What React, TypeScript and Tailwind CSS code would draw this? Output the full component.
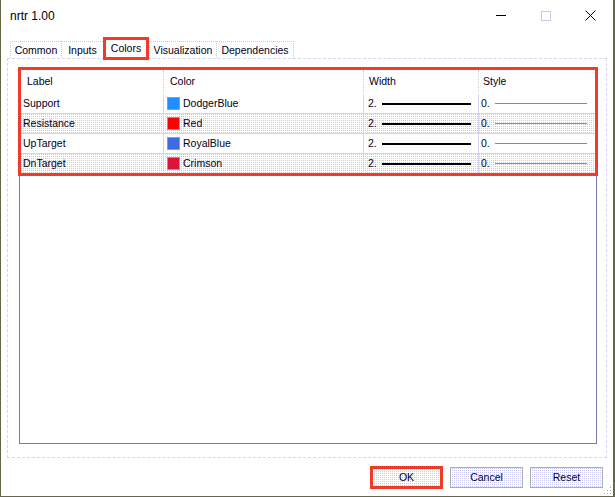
import React from "react";

const rows = [
  { label: "Support", color: "#1e90ff", name: "DodgerBlue", alt: false },
  { label: "Resistance", color: "#ff0000", name: "Red", alt: true },
  { label: "UpTarget", color: "#4169e1", name: "RoyalBlue", alt: false },
  { label: "DnTarget", color: "#dc143c", name: "Crimson", alt: true },
];

function Tab({ label, w }: { label: string; w: string }) {
  return (
    <div
      className={`${w} h-[17px] flex items-center justify-center border-l border-t border-dotted border-[#c4c4ee] text-[10.5px] leading-none text-[#00001a]`}
    >
      {label}
    </div>
  );
}

export default function App() {
  return (
    <div
      className="relative w-[615px] h-[497px] bg-white border-l border-r-2 border-b border-[#66664a] flex flex-col"
      style={{ fontFamily: '"Liberation Sans", Arial, sans-serif' }}
    >
      {/* Title bar */}
      <div className="h-[31px] flex items-center shrink-0">
        <span className="pl-[9px] text-[12px] text-black leading-none">nrtr 1.00</span>
        <div className="ml-auto flex h-full">
          <div className="w-[45px] h-full flex items-center justify-center">
            <div className="w-[10px] h-px bg-black" />
          </div>
          <div className="w-[45px] h-full flex items-center justify-center">
            <div className="w-[10px] h-[10px] border border-[#c8c8ee]" />
          </div>
          <div className="w-[45px] h-full flex items-center justify-center">
            <svg width="11" height="11" viewBox="0 0 11 11">
              <path d="M0.5 0.5 L10.5 10.5 M10.5 0.5 L0.5 10.5" stroke="#000" strokeWidth="1" />
            </svg>
          </div>
        </div>
      </div>

      {/* Tabs */}
      <div className="h-[27px] flex items-end pl-[9px] shrink-0">
        <Tab label="Common" w="w-[51px]" />
        <Tab label="Inputs" w="w-[42px]" />
        <div className="relative z-10 w-[46px] h-[23px] -mb-[2px] border-[3px] border-[#f23a2a] bg-white flex items-start justify-center pt-[3px] text-[10.5px] leading-none text-[#00001a]">
          Colors
        </div>
        <Tab label="Visualization" w="w-[67px]" />
        <div className="w-[78px] h-[17px] flex items-center justify-center border-l border-t border-r border-dotted border-[#c4c4ee] text-[10.5px] leading-none text-[#00001a]">
          Dependencies
        </div>
      </div>

      {/* Panel */}
      <div className="ml-[6px] w-[600px] h-[400px] border border-dashed border-[#d4d4f6] pl-[11px] pt-[8px] shrink-0">
        <div className="relative w-[578px] h-[377px] border border-[#7a7ab2] bg-white text-[10.5px] leading-none text-[#00001a]">
          {/* header */}
          <div className="flex h-[26px] items-center">
            <div className="w-[143px] h-full flex items-center pl-[7px]">Label</div>
            <div className="w-[200px] h-[22px] flex items-center pl-[6px] border-l border-dotted border-[#c8c8e8]">Color</div>
            <div className="w-[115px] h-[22px] flex items-center pl-[5px] border-l border-dotted border-[#c8c8e8]">Width</div>
            <div className="w-[118px] h-[22px] flex items-center pl-[4px] border-l border-dotted border-[#c8c8e8]">Style</div>
          </div>
          {rows.map((r) => (
            <div
              key={r.label}
              className={`flex h-[20px] border-b border-[#d4d4f2] ${
                r.alt
                  ? "bg-[image:repeating-conic-gradient(#c8c8ee_0%_25%,#ffffff_0%_100%)] bg-[length:2px_2px]"
                  : "bg-white"
              }`}
            >
              <div className="w-[143px] h-full flex items-center pl-[3px]">{r.label}</div>
              <div className="w-[200px] h-full flex items-center pl-[3px] border-l border-[#d4d4f2]">
                <span
                  className="w-[13px] h-[13px] border border-[#9a9aa8] shrink-0"
                  style={{ backgroundColor: r.color }}
                />
                <span className="pl-[3px]">{r.name}</span>
              </div>
              <div className="w-[115px] h-full flex items-center pl-[4px] border-l border-[#d4d4f2]">
                <span className="w-[14px]">2.</span>
                <span className="w-[89px] h-[2px] bg-black" />
              </div>
              <div className="w-[118px] h-full flex items-center pl-[2px] border-l border-[#d4d4f2]">
                <span className="w-[14px]">0.</span>
                <span className="w-[92px] h-px bg-[#8c8c8c]" />
              </div>
            </div>
          ))}
          {/* highlight */}
          <div className="absolute -left-[2px] -top-px w-[580px] h-[109px] border-[3px] border-[#f23a2a] pointer-events-none" />
        </div>
      </div>

      {/* Buttons */}
      <div className="mt-[8px] h-[23px] flex items-center justify-end gap-[7px] pr-[10px] text-[10.5px] leading-none text-[#00001a]">
        <div className="w-[73px] h-[23px] border-[3px] border-[#f23a2a] flex items-center justify-center bg-[image:repeating-conic-gradient(#c8c8ee_0%_25%,#ffffff_0%_100%)] bg-[length:2px_2px]">
          OK
        </div>
        <div className="w-[73px] h-[21px] border border-[#adadad] flex items-center justify-center bg-[image:repeating-conic-gradient(#c8c8ee_0%_25%,#ffffff_0%_100%)] bg-[length:2px_2px]">
          Cancel
        </div>
        <div className="w-[73px] h-[21px] border border-[#adadad] flex items-center justify-center bg-[image:repeating-conic-gradient(#c8c8ee_0%_25%,#ffffff_0%_100%)] bg-[length:2px_2px]">
          Reset
        </div>
      </div>

      {/* resize grip */}
      <svg className="absolute right-[1px] bottom-[1px]" width="8" height="8" viewBox="0 0 8 8">
        <rect x="6" y="0" width="1" height="1" fill="#a0a0b0" />
        <rect x="3" y="3" width="1" height="1" fill="#a0a0b0" />
        <rect x="6" y="3" width="1" height="1" fill="#a0a0b0" />
        <rect x="0" y="6" width="1" height="1" fill="#a0a0b0" />
        <rect x="3" y="6" width="1" height="1" fill="#a0a0b0" />
        <rect x="6" y="6" width="1" height="1" fill="#a0a0b0" />
      </svg>
    </div>
  );
}
